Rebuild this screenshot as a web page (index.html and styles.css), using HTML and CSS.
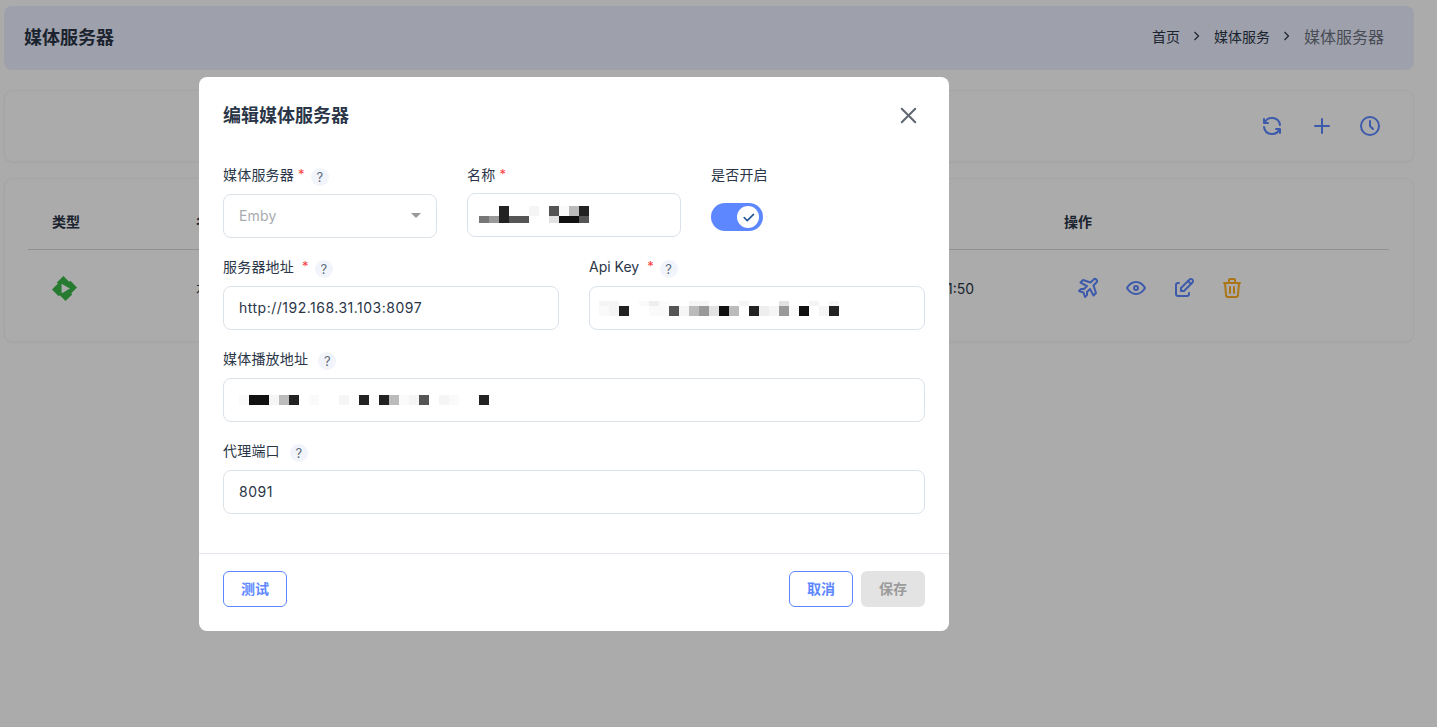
FILE: index.html
```html
<!DOCTYPE html>
<html lang="zh-CN">
  <head>
    <meta charset="UTF-8" />
    <meta name="viewport" content="width=device-width, initial-scale=1.0" />
    <title>媒体服务器</title>
    <link rel="stylesheet" href="styles.css">
  </head>
  <body>
    <section class="page">
      <header class="page-head">
        <h1>媒体服务器</h1>
        <nav class="crumbs">
          <a>首页</a>
          <span class="crumb-sep"><svg width="8" height="12" viewBox="0 0 8 12"><path d="M1.5 2l4 4l-4 4" /></svg></span>
          <a>媒体服务</a>
          <span class="crumb-sep"><svg width="8" height="12" viewBox="0 0 8 12"><path d="M1.5 2l4 4l-4 4" /></svg></span>
          <span class="crumb-now">媒体服务器</span>
        </nav>
      </header>

      <section class="card toolbar">
        <svg class="icon blue refresh" viewBox="0 0 24 24"><path d="M20 11a8.1 8.1 0 0 0 -15.5 -2m-.5 -4v4h4" /><path d="M4 13a8.1 8.1 0 0 0 15.5 2m.5 4v-4h-4" /></svg>
        <svg class="icon blue" viewBox="0 0 24 24"><path d="M12 5l0 14" /><path d="M5 12l14 0" /></svg>
        <svg class="icon blue" viewBox="0 0 24 24"><path d="M3 12a9 9 0 1 0 18 0a9 9 0 0 0 -18 0" /><path d="M12 7v5l3 3" /></svg>
      </section>

      <section class="card table-card">
        <table>
          <colgroup>
            <col class="col-type" />
            <col class="col-name" />
            <col class="col-time" />
            <col class="col-ops" />
          </colgroup>
          <thead>
            <tr><th>类型</th><th>名称</th><th>更新时间</th><th>操作</th></tr>
          </thead>
          <tbody>
            <tr>
              <td>
                <svg class="emby" viewBox="0 0 24 24"><path fill-rule="evenodd" d="M11.041 0c-.007 0-1.456 1.43-3.219 3.176L4.615 6.352l.512.513.512.512-2.819 2.791L0 12.961l1.83 1.848c1.006 1.016 2.438 2.46 3.182 3.209l1.351 1.359.508-.496c.28-.273.515-.498.524-.498.008 0 1.266 1.264 2.794 2.808L12.97 24l.187-.182c.23-.225 5.007-4.95 5.717-5.656l.52-.516-.502-.513c-.276-.282-.5-.52-.496-.53.003-.009 1.264-1.26 2.802-2.783 1.538-1.522 2.8-2.776 2.803-2.785.005-.012-3.617-3.684-6.107-6.193L17.65 4.6l-.505.505c-.279.278-.517.501-.53.497-.013-.005-1.27-1.267-2.793-2.805A449.655 449.655 0 0 0 11.041 0zM9.223 7.367c.091.038 7.951 4.608 7.957 4.627.003.013-1.781 1.056-3.965 2.32a999.898 999.898 0 0 1-3.996 2.307c-.019.006-.026-1.266-.026-4.629 0-3.7.007-4.634.03-4.625Z" /></svg>
              </td>
              <td>本地</td>
              <td>2023-08-12 21:11:50</td>
              <td>
                <div class="ops">
                  <svg class="icon blue" viewBox="0 0 24 24"><path d="M14.5 6.5l3 -2.9a2.05 2.05 0 0 1 2.9 2.9l-2.9 3l2.5 7.5l-2.5 2.55l-3.5 -6.5l-3 3v3l-2 2l-1.5 -4.5l-4.5 -1.5l2 -2h3l3 -3l-6.5 -3.5l2.55 -2.5l7.5 2.5z" /></svg>
                  <svg class="icon blue" viewBox="0 0 24 24"><path d="M10 12a2 2 0 1 0 4 0a2 2 0 0 0 -4 0" /><path d="M21 12c-2.4 4 -5.4 6 -9 6c-3.6 0 -6.6 -2 -9 -6c2.4 -4 5.4 -6 9 -6c3.6 0 6.6 2 9 6" /></svg>
                  <svg class="icon blue" viewBox="0 0 24 24"><path d="M7 7h-1a2 2 0 0 0 -2 2v9a2 2 0 0 0 2 2h9a2 2 0 0 0 2 -2v-1" /><path d="M20.385 6.585a2.1 2.1 0 0 0 -2.97 -2.97l-8.415 8.385v3h3l8.385 -8.415z" /><path d="M16 5l3 3" /></svg>
                  <svg class="icon amber" viewBox="0 0 24 24"><path d="M4 7l16 0" /><path d="M10 11l0 6" /><path d="M14 11l0 6" /><path d="M5 7l1 12a2 2 0 0 0 2 2h8a2 2 0 0 0 2 -2l1 -12" /><path d="M9 7v-3a1 1 0 0 1 1 -1h4a1 1 0 0 1 1 1v3" /></svg>
                </div>
              </td>
            </tr>
          </tbody>
        </table>
      </section>
    </section>

    <div class="overlay"></div>

    <section class="modal">
      <div class="modal-head">
        <h2>编辑媒体服务器</h2>
        <svg class="close" viewBox="0 0 24 24"><path d="M18 6l-12 12" /><path d="M6 6l12 12" /></svg>
      </div>

      <div class="modal-body">
        <div class="row row-3">
          <div>
            <label class="label">媒体服务器<i class="star">*</i><b class="help">?</b></label>
            <div class="field field-off">Emby<span class="caret"></span></div>
          </div>
          <div>
            <label class="label">名称<i class="star">*</i></label>
            <div class="field pad-name">
              <div class="mosaic mosaic-up">
                <div class="m-row h10"><span></span><span></span><span class="s2"></span><span></span><span></span><span class="s9"></span><span></span><span class="s3"></span><span class="s10"></span><span class="s6"></span><span class="s2"></span></div>
                <div class="m-row h7"><span class="s4"></span><span class="s5"></span><span class="s2"></span><span class="s3"></span><span class="s3"></span><span></span><span></span><span class="s7"></span><span class="s1"></span><span class="s1"></span><span class="s3"></span></div>
              </div>
            </div>
          </div>
          <div>
            <label class="label">是否开启</label>
            <div class="switch">
              <span class="knob"><svg viewBox="0 0 24 24"><path d="M5 12l5 5l10 -10" /></svg></span>
            </div>
          </div>
        </div>

        <div class="row row-2">
          <div>
            <label class="label">服务器地址<i class="star wide">*</i><b class="help">?</b></label>
            <input class="field" type="text" value="http://192.168.31.103:8097" />
          </div>
          <div>
            <label class="label label-latin">Api Key<i class="star wide">*</i><b class="help">?</b></label>
            <div class="field pad-key">
              <div class="mosaic">
                <div class="m-row h5"><span class="s9"></span><span class="s9"></span><span></span><span></span><span class="s10"></span><span class="s8"></span><span class="s10"></span><span></span><span></span><span class="s9"></span><span class="s9"></span><span></span><span></span><span></span><span class="s9"></span><span></span><span></span><span></span><span class="s7"></span><span></span><span></span><span class="s9"></span><span></span><span class="s9"></span></div>
                <div class="m-row h10"><span class="s10"></span><span class="s9"></span><span class="s2"></span><span></span><span></span><span class="s10"></span><span class="s10"></span><span class="s3"></span><span class="s9"></span><span class="s6"></span><span class="s5"></span><span class="s7"></span><span class="s1"></span><span class="s6"></span><span></span><span class="s2"></span><span class="s8"></span><span class="s9"></span><span class="s5"></span><span class="s10"></span><span class="s1"></span><span></span><span class="s9"></span><span class="s2"></span></div>
              </div>
            </div>
          </div>
        </div>

        <div class="row">
          <div>
            <label class="label">媒体播放地址<b class="help help-far">?</b></label>
            <div class="field">
              <div class="mosaic">
                <div class="m-row h10"><span class="s10"></span><span class="s1"></span><span class="s1"></span><span class="s9"></span><span class="s6"></span><span class="s2"></span><span></span><span class="s10"></span><span></span><span></span><span class="s9"></span><span></span><span class="s2"></span><span></span><span class="s2"></span><span class="s6"></span><span class="s10"></span><span class="s9"></span><span class="s3"></span><span></span><span class="s9"></span><span class="s10"></span><span></span><span></span><span class="s2"></span></div>
              </div>
            </div>
          </div>
        </div>

        <div class="row">
          <div>
            <label class="label">代理端口<b class="help help-far">?</b></label>
            <input class="field" type="text" value="8091" />
          </div>
        </div>
      </div>

      <div class="modal-foot">
        <button class="btn btn-line">测试</button>
        <div class="foot-right">
          <button class="btn btn-line">取消</button>
          <button class="btn btn-off">保存</button>
        </div>
      </div>
    </section>
  </body>
</html>
```

FILE: styles.css
```css
* {
  box-sizing: border-box;
}
html,
body {
  height: 100%;
  margin: 0;
  overflow: hidden;
}
body {
  background: #fff;
  color: #2a3547;
  font: 14px Inter, "Noto Sans CJK SC", sans-serif;
}

/* page behind the dialog */
.page {
  padding: 6px 23px 0 4px;
}
.page-head {
  height: 64px;
  margin-bottom: 20px;
  padding: 0 30px 4px 20px;
  display: flex;
  align-items: center;
  justify-content: space-between;
  background: #ecefff;
  border-radius: 8px;
}
.page-head h1 {
  margin: 0;
  font-size: 18px;
  font-weight: 600;
}
.crumbs {
  display: flex;
  align-items: center;
}
.crumb-sep {
  width: 34px;
  display: flex;
  justify-content: center;
}
.crumb-sep path {
  fill: none;
  stroke: #2a3547;
  stroke-width: 1.2;
}
.crumb-now {
  font-size: 16px;
  color: #6b7280;
}
.card {
  background: #fff;
  border: 1px solid #f6f6f7;
  border-radius: 8px;
  box-shadow: 0 1px 2px rgba(0, 0, 0, 0.03);
}
.toolbar {
  height: 72px;
  margin-bottom: 16px;
  padding-right: 31px;
  display: flex;
  align-items: center;
  justify-content: flex-end;
  gap: 24px;
}
.refresh {
  margin-right: 2px;
}
.icon {
  width: 24px;
  height: 24px;
  flex: none;
  fill: none;
  stroke-width: 2;
  stroke-linecap: round;
  stroke-linejoin: round;
}
.blue {
  stroke: #5d87ff;
}
.amber {
  stroke: #ffae1f;
}
.table-card {
  height: 164px;
  padding: 14px 24px 0 23px;
}
table {
  width: 1361px;
  border-collapse: collapse;
  table-layout: fixed;
}
.col-type {
  width: 144px;
}
.col-name {
  width: 644px;
}
.col-time {
  width: 224px;
}
.col-ops {
  width: 349px;
}
th {
  height: 56px;
  padding: 0 24px;
  text-align: left;
  font-weight: 600;
  border-bottom: 1px solid #d5d9df;
}
td {
  height: 78px;
  padding: 0 24px;
  white-space: nowrap;
}
.emby {
  display: block;
  width: 25px;
  height: 25px;
  fill: #3ab848;
}
.ops {
  display: flex;
  gap: 24px;
  margin-left: 12px;
}

/* dialog */
.overlay {
  position: fixed;
  inset: 0;
  background: rgba(0, 0, 0, 0.33);
}
.modal {
  position: absolute;
  left: 199px;
  top: 77px;
  width: 750px;
  height: 554px;
  background: #fff;
  border-radius: 8px;
}
.modal-head {
  height: 89px;
  padding: 25px 24px 0;
  display: flex;
  justify-content: space-between;
}
.modal-head h2 {
  margin: 0;
  font-size: 18px;
  line-height: 28px;
  font-weight: 600;
}
.close {
  width: 27px;
  height: 27px;
  margin-right: 3px;
  fill: none;
  stroke: #5f6670;
  stroke-width: 1.8;
  stroke-linecap: round;
}
.modal-body {
  height: 387px;
  padding: 0 24px;
}
.row {
  margin-bottom: 20px;
  display: grid;
  gap: 30px;
  align-items: start;
}
.row-3 {
  grid-template-columns: repeat(3, 1fr);
}
.row-2 {
  grid-template-columns: repeat(2, 1fr);
}
.label {
  min-height: 19px;
  margin-bottom: 8px;
  display: flex;
  align-items: flex-start;
  line-height: 17px;
  letter-spacing: 0.2px;
  color: #2a3547;
}
.label-latin {
  letter-spacing: 0;
}
.star {
  margin-left: 4px;
  color: #fa3e3e;
  font-style: normal;
  font-size: 13px;
  line-height: 17px;
}
.star.wide {
  margin-left: 8px;
}
.help {
  width: 18px;
  height: 18px;
  margin: 2px 0 0 6px;
  display: flex;
  align-items: center;
  justify-content: center;
  border-radius: 50%;
  background: #f1f4fa;
  color: #5f6b7a;
  font-size: 13px;
  font-weight: 400;
  letter-spacing: 0;
}
.help-far {
  margin-left: 10px;
}
.field {
  display: flex;
  align-items: center;
  width: 100%;
  height: 44px;
  padding: 0 15px 2px;
  background: #fff;
  border: 1px solid #dce2ea;
  border-radius: 8px;
  color: #2a3547;
  font: inherit;
  letter-spacing: 0.2px;
  outline: none;
}
input.field {
  letter-spacing: 0.5px;
}
.field-off {
  justify-content: space-between;
  color: #a8abb0;
}
.caret {
  width: 0;
  height: 0;
  border-left: 5px solid transparent;
  border-right: 5px solid transparent;
  border-top: 5px solid #9a9a9a;
}
.pad-name {
  padding-left: 11px;
}
.pad-key {
  padding-left: 9px;
}
.mosaic {
  margin-top: 2px;
  display: flex;
  flex-direction: column;
}
.mosaic-up {
  margin-top: 0;
}
.m-row {
  display: flex;
}
.m-row span {
  width: 10px;
  flex: none;
}
.h5 {
  height: 5px;
}
.h7 {
  height: 7px;
}
.h10 {
  height: 10px;
}
.s1 { background: #111; }
.s2 { background: #222; }
.s3 { background: #555; }
.s4 { background: #777; }
.s5 { background: #999; }
.s6 { background: #bbb; }
.s7 { background: #e2e2e2; }
.s8 { background: #eee; }
.s9 { background: #f5f5f5; }
.s10 { background: #fafafa; }
.switch {
  width: 52px;
  height: 28px;
  margin-top: 18px;
  padding: 3px 4px 3px 3px;
  display: flex;
  justify-content: flex-end;
  background: #5d87ff;
  border-radius: 14px;
}
.knob {
  width: 22px;
  height: 22px;
  display: flex;
  align-items: center;
  justify-content: center;
  background: #fff;
  border-radius: 50%;
}
.knob svg {
  width: 15px;
  height: 15px;
  fill: none;
  stroke: #1c4f94;
  stroke-width: 2.4;
  stroke-linecap: round;
  stroke-linejoin: round;
}
.modal-foot {
  height: 78px;
  padding: 17px 24px 0;
  display: flex;
  justify-content: space-between;
  align-items: flex-start;
  border-top: 1px solid #e3e6ec;
}
.foot-right {
  display: flex;
  gap: 8px;
}
.btn {
  width: 64px;
  height: 36px;
  padding: 0 0 2px;
  border-radius: 6px;
  font: 600 14px Inter, "Noto Sans CJK SC", sans-serif;
}
.btn-line {
  background: #fff;
  border: 1px solid #5d87ff;
  color: #5d87ff;
}
.btn-off {
  background: #e3e3e3;
  border: 0;
  color: #9b9b9b;
}
```
